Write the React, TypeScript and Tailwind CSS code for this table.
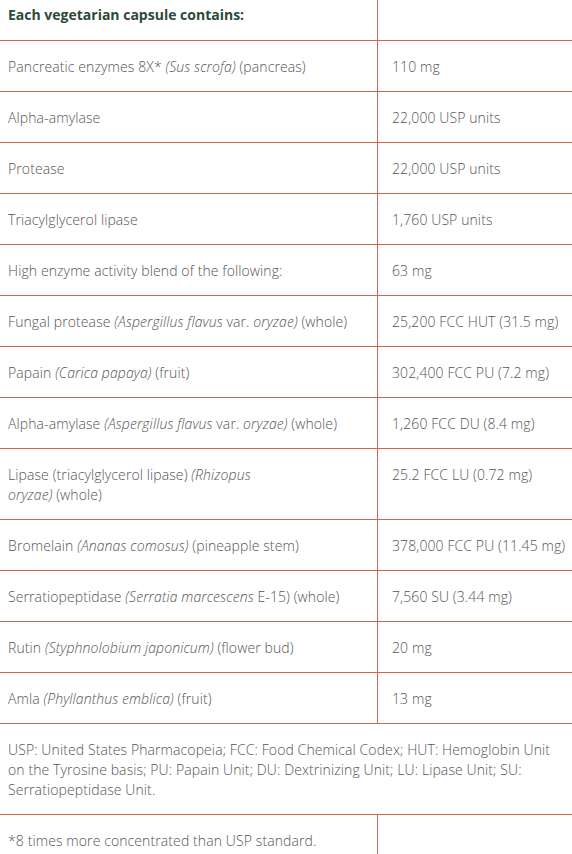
import React from 'react';

type Row = { name: React.ReactNode; amount: string };

const ROWS: Row[] = [
  { name: <>Pancreatic enzymes 8X* <i>(Sus scrofa)</i> (pancreas)</>, amount: '110 mg' },
  { name: 'Alpha-amylase', amount: '22,000 USP units' },
  { name: 'Protease', amount: '22,000 USP units' },
  { name: 'Triacylglycerol lipase', amount: '1,760 USP units' },
  { name: 'High enzyme activity blend of the following:', amount: '63 mg' },
  { name: <>Fungal protease <i>(Aspergillus flavus</i> var. <i>oryzae)</i> (whole)</>, amount: '25,200 FCC HUT (31.5 mg)' },
  { name: <>Papain <i>(Carica papaya)</i> (fruit)</>, amount: '302,400 FCC PU (7.2 mg)' },
  { name: <>Alpha-amylase <i>(Aspergillus flavus</i> var. <i>oryzae)</i> (whole)</>, amount: '1,260 FCC DU (8.4 mg)' },
  { name: <>Lipase (triacylglycerol lipase) <i>(Rhizopus</i><br /><i>oryzae)</i> (whole)</>, amount: '25.2 FCC LU (0.72 mg)' },
  { name: <>Bromelain <i>(Ananas comosus)</i> (pineapple stem)</>, amount: '378,000 FCC PU (11.45 mg)' },
  { name: <>Serratiopeptidase <i>(Serratia marcescens</i> E-15) (whole)</>, amount: '7,560 SU (3.44 mg)' },
  { name: <>Rutin <i>(Styphnolobium japonicum)</i> (flower bud)</>, amount: '20 mg' },
  { name: <>Amla <i>(Phyllanthus emblica)</i> (fruit)</>, amount: '13 mg' },
];

export default function App() {
  return (
    <div className="w-[572px] h-[854px] overflow-hidden bg-white text-[14px] leading-[20px] tracking-[0.1px] text-[#555] font-light" style={{ fontFamily: '"Open Sans", "Liberation Sans", sans-serif' }}>
      <div className="grid grid-cols-[378px_1fr]">
        <div className="border-b border-r border-[#d0694a] pl-2 pr-3 pt-[5px] pb-[15px] font-bold tracking-normal text-[#2d4a38]">
          Each vegetarian capsule contains:
        </div>
        <div className="border-b border-[#d0694a]" />
        {ROWS.map((r, i) => (
          <React.Fragment key={i}>
            <div className="border-b border-r border-[#d0694a] pl-2 pr-2 pt-[16px] pb-[14px]">{r.name}</div>
            <div className="border-b border-[#d0694a] pl-[14px] pt-[16px] pb-[14px]">{r.amount}</div>
          </React.Fragment>
        ))}
        <div className="col-span-2 border-b border-[#d0694a] pl-2 pr-2 pt-[16px] pb-[14px]">
          USP: United States Pharmacopeia; FCC: Food Chemical Codex; HUT: Hemoglobin Unit on the Tyrosine basis; PU: Papain Unit; DU: Dextrinizing Unit; LU: Lipase Unit; SU: Serratiopeptidase Unit.
        </div>
        <div className="border-r border-[#d0694a] pl-2 pt-[16px] pb-[14px]">*8 times more concentrated than USP standard.</div>
        <div />
      </div>
    </div>
  );
}
